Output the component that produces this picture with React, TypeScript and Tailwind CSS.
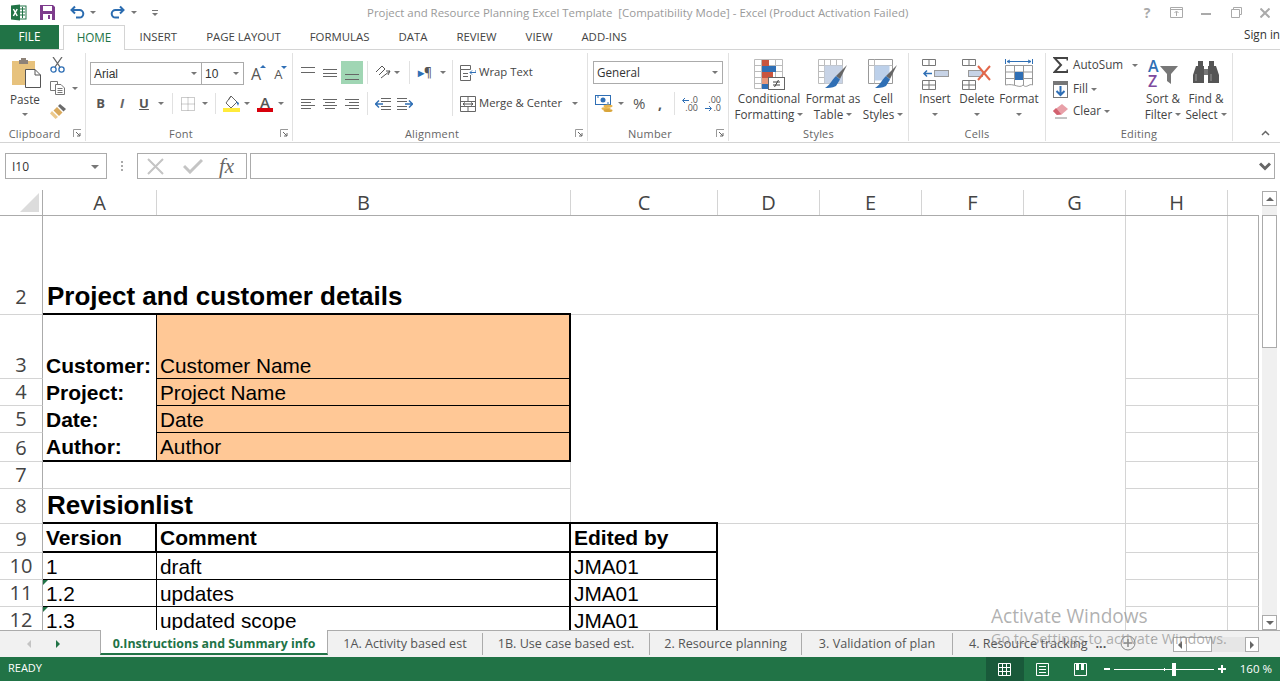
import React from 'react';

const ui = "font-['Open_Sans',sans-serif]";
const cellFont = "font-['Liberation_Sans',Arial,sans-serif]";

const Caret = ({ className = '' }: { className?: string }) => (
  <span className={`inline-block w-0 h-0 border-l-[3px] border-r-[3px] border-t-[3px] border-l-transparent border-r-transparent border-t-[#777] ${className}`} />
);

const Sep = ({ className = '' }: { className?: string }) => <div className={`w-px bg-[#e1e1e1] ${className}`} />;

// little square arrow at the corner of a group caption
const Launcher = () => (
  <svg width="9" height="9" viewBox="0 0 9 9" className="absolute right-[3px] top-[3px]">
    <path d="M0.5 8V0.5H8" fill="none" stroke="#999" />
    <path d="M3 3L7 7M7 4V7H4" fill="none" stroke="#666" />
  </svg>
);

const Group = ({ w, label, launcher, children }: { w: string; label: string; launcher?: boolean; children: React.ReactNode }) => (
  <div className={`${w} h-[88px] flex flex-col border-r border-[#e1e1e1] shrink-0`}>
    <div className="h-[73px] flex">{children}</div>
    <div className={`relative h-[15px] text-center text-[11px] leading-[15px] text-[#666] tracking-[0.2px] ${launcher ? 'pr-[16px]' : ''}`}>
      {label}
      {launcher && <Launcher />}
    </div>
  </div>
);

const BigButton = ({ w, icon, line1, line2, caret2 }: { w: string; icon: React.ReactNode; line1: string; line2?: string; caret2?: boolean }) => (
  <div className={`${w} flex flex-col items-center`}>
    <div className="h-[37px] pt-[6px] flex justify-center">{icon}</div>
    <div className="h-[16px] leading-[16px] whitespace-nowrap">{line1}</div>
    <div className="h-[16px] leading-[16px] whitespace-nowrap flex items-center gap-[3px]">
      {line2}
      {caret2 && <Caret className="mt-[1px]" />}
    </div>
  </div>
);

const Lines = ({ rows, w = 14 }: { rows: [number, number, number][]; w?: number }) => (
  <svg width={w} height="12" viewBox={`0 0 ${w} 12`} className="block">
    {rows.map(([x1, x2, y]) => (
      <path key={y} d={`M${x1} ${y + 0.5}H${x2}`} stroke="#666" />
    ))}
  </svg>
);

const ExcelIcon = () => (
  <svg width="17" height="17" viewBox="0 0 17 17">
    <rect x="8" y="2" width="8" height="13" fill="#fff" stroke="#217346" />
    <path d="M10 5h5M10 8h5M10 11h5M12.5 3v11" stroke="#217346" />
    <path d="M1 1.5L10 0.5V16.5L1 15.5Z" fill="#217346" />
    <path d="M3.4 5L7.2 12M7.2 5L3.4 12" stroke="#fff" strokeWidth="1.5" />
  </svg>
);

const SaveIcon = () => (
  <svg width="15" height="15" viewBox="0 0 15 15">
    <path d="M0 0H13L15 2V15H0Z" fill="#7d3c8c" />
    <rect x="3" y="1" width="9" height="5" fill="#fff" />
    <rect x="3" y="9" width="9" height="6" fill="#fff" />
    <rect x="8" y="10" width="2" height="4" fill="#7d3c8c" />
  </svg>
);

const UndoIcon = ({ flip }: { flip?: boolean }) => (
  <svg width="15" height="15" viewBox="0 0 15 15" className={flip ? '-scale-x-100' : ''}>
    <path d="M5 1.5L1.5 5L5 8.5" fill="none" stroke="#2b6cb0" strokeWidth="2" />
    <path d="M2 5H9.5a3.8 3.8 0 0 1 0 7.6H6" fill="none" stroke="#2b6cb0" strokeWidth="2" />
  </svg>
);

const PasteIcon = () => (
  <svg width="30" height="31" viewBox="0 0 30 31" className="ml-[2px]">
    <path d="M1 4H24V28H1Z" fill="#e7c27d" />
    <path d="M8 3H10V1H15V3H17V7H8Z" fill="#8d8278" />
    <path d="M14.5 12.5H24L29.5 18V30.5H14.5Z" fill="#fff" stroke="#555" />
    <path d="M24 12.5V18H29.5" fill="none" stroke="#555" />
  </svg>
);

const CutIcon = () => (
  <svg width="15" height="16" viewBox="0 0 15 16">
    <path d="M3 0L10 10M12 0L5 10" stroke="#666" strokeWidth="1.3" fill="none" />
    <circle cx="3.5" cy="12.5" r="2.6" fill="none" stroke="#2f6fb5" strokeWidth="1.3" />
    <circle cx="11.5" cy="12.5" r="2.6" fill="none" stroke="#2f6fb5" strokeWidth="1.3" />
  </svg>
);

const CopyIcon = () => (
  <svg width="15" height="14" viewBox="0 0 15 14" fill="none" stroke="#777">
    <path d="M0.5 0.5H7.5V9.5H0.5Z" />
    <path d="M5.5 3.5H11L14.5 7V13.5H5.5Z" fill="#fff" />
    <path d="M7.5 7.5H12.5M7.5 9.5H12.5M7.5 11.5H12.5" />
  </svg>
);

const PainterIcon = () => (
  <svg width="16" height="15" viewBox="0 0 16 15">
    <path d="M8 2L10 0L16 5L13.5 7.5Z" fill="#6b6b6b" />
    <path d="M7 3L12.5 8.5L9 12L3.5 6.5Z" fill="#d9a95c" />
    <path d="M2 7L8 13L5.5 15L0 9.5Z" fill="#ecc98c" />
  </svg>
);

const GrowA = ({ small }: { small?: boolean }) => (
  <div className="relative flex items-end">
    <span className={small ? 'text-[13px] leading-[14px] text-[#555]' : 'text-[16px] leading-[16px] text-[#555]'}>A</span>
    <span className={`absolute -top-[1px] -right-[5px] w-0 h-0 border-l-[3px] border-r-[3px] border-l-transparent border-r-transparent ${small ? 'border-t-[3px] border-t-[#2f6fb5]' : 'border-b-[3px] border-b-[#2f6fb5]'}`} />
  </div>
);

const BorderIcon = () => (
  <svg width="14" height="14" viewBox="0 0 14 14" fill="none" stroke="#999" strokeDasharray="1 1">
    <path d="M0.5 0.5H13.5V13.5H0.5ZM7 0.5V13.5M0.5 7H13.5" />
  </svg>
);

const FillIcon = () => (
  <svg width="17" height="17" viewBox="0 0 17 17">
    <path d="M8 1L14 7L8 13L3 8Z" fill="#fff" stroke="#666" />
    <path d="M8 1L5.5 5" stroke="#666" />
    <path d="M13 6L15 11L16 8Z" fill="#2f6fb5" />
    <rect x="0" y="13" width="17" height="4" fill="#ffeb3b" />
  </svg>
);

const FontColorIcon = () => (
  <div className="relative w-[16px] h-[17px] flex flex-col items-center">
    <span className="text-[15px] leading-[14px] text-[#555] font-semibold">A</span>
    <span className="absolute bottom-0 left-0 w-[16px] h-[4px] bg-[#d8000c]" />
  </div>
);

const OrientIcon = () => (
  <svg width="17" height="17" viewBox="0 0 17 17" fill="none" stroke="#555">
    <path d="M1 8L7 2L10 5L4 11" />
    <path d="M6 14L15 7M15 7H11M15 7L13 11" />
  </svg>
);

const IndentIcon = ({ flip }: { flip?: boolean }) => (
  <svg width="16" height="12" viewBox="0 0 16 12" className={flip ? '-scale-x-100' : ''}>
    <path d="M6 0.5H16M6 3.5H16M6 8.5H16M6 11.5H16" stroke="#666" />
    <path d="M0 6H8M4 2.5L0.5 6L4 9.5" fill="none" stroke="#2f6fb5" strokeWidth="1.5" />
  </svg>
);

const WrapIcon = () => (
  <svg width="16" height="16" viewBox="0 0 16 16" fill="none" stroke="#666">
    <path d="M0.5 0.5H10.5V4.5H0.5ZM0.5 4.5V15.5H10.5V10M3 8.5H8M3 11.5H8" />
    <path d="M16 5V7.5H10M12 5.5L10 7.5L12 9.5" stroke="#2f6fb5" />
  </svg>
);

const MergeIcon = () => (
  <svg width="16" height="16" viewBox="0 0 16 16" fill="none" stroke="#666">
    <path d="M0.5 0.5H15.5V15.5H0.5ZM0.5 5.5H15.5M0.5 10.5H15.5M8 0.5V5.5M8 10.5V15.5" />
    <path d="M3 8H13M5 6.5L3 8L5 9.5M11 6.5L13 8L11 9.5" stroke="#555" />
  </svg>
);

const AccountingIcon = () => (
  <svg width="19" height="17" viewBox="0 0 19 17">
    <rect x="0.5" y="0.5" width="15" height="9" fill="#fff" stroke="#2f6fb5" />
    <circle cx="8" cy="5" r="2.5" fill="#2f6fb5" />
    <path d="M2 2H4M12 8H14" stroke="#2f6fb5" />
    <ellipse cx="13" cy="11" rx="4.5" ry="1.5" fill="#e8b54d" />
    <ellipse cx="11" cy="13.5" rx="4.5" ry="1.5" fill="#e8b54d" />
    <ellipse cx="13" cy="15.5" rx="4.5" ry="1.5" fill="#d9a53a" />
  </svg>
);

const DecimalIcon = ({ more }: { more?: boolean }) => (
  <div className="relative w-[16px] h-[16px] text-[9px] leading-[8px] text-[#555]">
    <div className="text-right">{more ? '.00' : '.0'}</div>
    <div className="text-right">{more ? '.0' : '.00'}</div>
    <svg width="7" height="7" viewBox="0 0 7 7" className={`absolute left-0 ${more ? 'top-[9px]' : 'top-[1px]'}`} fill="none" stroke="#2f6fb5">
      {more ? <path d="M0 3.5H6M4 1L6.5 3.5L4 6" /> : <path d="M7 3.5H1M3 1L0.5 3.5L3 6" />}
    </svg>
  </div>
);

const CondIcon = () => (
  <svg width="31" height="31" viewBox="0 0 31 31" fill="none">
    <path d="M0.5 0.5H28.5V29.5H0.5ZM0.5 6.5H28.5M0.5 12.5H28.5M0.5 18.5H28.5M0.5 24.5H28.5M7.5 0.5V29.5M14.5 0.5V29.5M21.5 0.5V29.5" stroke="#bbb" />
    <rect x="8" y="1" width="7" height="6" fill="#c9553f" />
    <rect x="8" y="7" width="14" height="6" fill="#2f6fb5" />
    <rect x="8" y="13" width="11" height="6" fill="#c9553f" />
    <rect x="8" y="19" width="7" height="6" fill="#e89a7c" />
    <rect x="8" y="25" width="6" height="5" fill="#2f6fb5" />
    <rect x="14.5" y="18.5" width="16" height="12" fill="#fff" stroke="#666" />
    <path d="M19 23H26M19 26H26M24.5 21L20.5 28" stroke="#444" />
  </svg>
);

const Brush = () => (
  <>
    <path d="M29 6L22 20L18 17Z" fill="#666" />
    <path d="M18 17L22 20.5L18 27C14 29 10 29 7 29C12 26 13 22 18 17Z" fill="#2f6fb5" />
  </>
);

const TableIcon = () => (
  <svg width="30" height="31" viewBox="0 0 30 31" fill="none">
    <path d="M0.5 0.5H24.5V24.5H0.5ZM0.5 6.5H24.5M0.5 12.5H24.5M0.5 18.5H24.5M6.5 0.5V24.5M12.5 0.5V24.5M18.5 0.5V24.5" stroke="#bbb" />
    <rect x="6.5" y="6.5" width="18" height="18" fill="#c7d3e6" />
    <Brush />
  </svg>
);

const StylesIcon = () => (
  <svg width="30" height="31" viewBox="0 0 30 31" fill="none">
    <path d="M0.5 0.5H24.5V24.5H0.5Z" stroke="#999" />
    <path d="M0.5 6.5H24.5M6.5 0.5V24.5" stroke="#bbb" />
    <rect x="6.5" y="6.5" width="15" height="15" fill="#bcd0ea" />
    <Brush />
  </svg>
);

const InsertIcon = () => (
  <svg width="27" height="31" viewBox="0 0 27 31" fill="none">
    <path d="M0.5 0.5H13.5V6.5H0.5ZM7 0.5V6.5M0.5 21.5H13.5V30.5H0.5ZM0.5 26H13.5M7 21.5V30.5" stroke="#777" />
    <rect x="12.5" y="11.5" width="14" height="6" fill="#c7d3e6" stroke="#999" />
    <path d="M10 14.5H2M5 11.5L2 14.5L5 17.5" stroke="#2f6fb5" strokeWidth="1.5" />
  </svg>
);

const DeleteIcon = () => (
  <svg width="30" height="31" viewBox="0 0 30 31" fill="none">
    <path d="M0.5 0.5H13.5V6.5H0.5ZM7 0.5V6.5M0.5 21.5H13.5V30.5H0.5ZM0.5 26H13.5M7 21.5V30.5" stroke="#777" />
    <rect x="6.5" y="11.5" width="14" height="6" fill="#c7d3e6" stroke="#999" />
    <path d="M16 7L28 21M28 7L16 21" stroke="#e2674a" strokeWidth="2" />
  </svg>
);

const FormatIcon = () => (
  <svg width="28" height="31" viewBox="0 0 28 31" fill="none">
    <path d="M0.5 0V5M27.5 0V5M2 2.5H26M5 1L2 2.5L5 4M23 1L26 2.5L23 4" stroke="#2f6fb5" />
    <path d="M0.5 6.5H27.5V26C24 24 22 30 18 26C14 30 10 24 0.5 26ZM0.5 13H27.5M0.5 19.5H27.5M9.5 6.5V26M18.5 6.5V26" stroke="#999" />
    <rect x="10" y="13" width="8" height="8" fill="#2f6fb5" />
  </svg>
);

const SigmaIcon = () => (
  <svg width="15" height="16" viewBox="0 0 15 16" fill="none" stroke="#444" strokeWidth="2">
    <path d="M14.5 3.5V1H1.5L8 8L1.5 15H14.5V12.5" />
  </svg>
);

const FillDownIcon = () => (
  <svg width="15" height="17" viewBox="0 0 15 17" fill="none">
    <rect x="0.5" y="0.5" width="14" height="16" fill="#fff" stroke="#777" />
    <rect x="0" y="0" width="15" height="4" fill="#777" />
    <path d="M7.5 5V14M3.5 10L7.5 14L11.5 10" stroke="#2f6fb5" strokeWidth="2" />
  </svg>
);

const EraserIcon = () => (
  <svg width="15" height="15" viewBox="0 0 15 15">
    <path d="M9 0L15 5L8 11H4L0 7Z" fill="#e8a0a8" />
    <path d="M2 14H14" stroke="#888" />
    <path d="M4 11L0 7L3 4L8 10Z" fill="#d2616f" />
  </svg>
);

const SortIcon = () => (
  <div className="relative w-[30px] h-[31px] font-semibold text-[16px] leading-[15px]">
    <div className="text-[#2f6fb5]">A</div>
    <div className="text-[#7d4a9e]">Z</div>
    <svg width="18" height="18" viewBox="0 0 18 18" className="absolute right-0 top-[7px]">
      <path d="M0 0H18L11 8V18L7 15V8Z" fill="#777" />
    </svg>
  </div>
);

const BinocularIcon = () => (
  <svg width="26" height="25" viewBox="0 0 26 25" className="mt-[2px]">
    <path d="M5 0H10V5H11V22H0V14L3 5H5Z" fill="#555" />
    <path d="M16 0H21V5H23L26 14V22H15V5H16Z" fill="#555" />
    <rect x="11" y="8" width="4" height="6" fill="#777" />
    <path d="M3 13V20M18 13V20" stroke="#999" />
  </svg>
);

const ribbonTabs = ['INSERT', 'PAGE LAYOUT', 'FORMULAS', 'DATA', 'REVIEW', 'VIEW', 'ADD-INS'];

const columns = [
  { l: 'A', w: 'w-[114px]' },
  { l: 'B', w: 'w-[414px]' },
  { l: 'C', w: 'w-[147px]' },
  { l: 'D', w: 'w-[102px]' },
  { l: 'E', w: 'w-[102px]' },
  { l: 'F', w: 'w-[102px]' },
  { l: 'G', w: 'w-[102px]' },
  { l: 'H', w: 'w-[102px]' },
];

const Row = ({ n, h, children, c, dg, tall }: { n: number; h: string; children: React.ReactNode; c?: React.ReactNode; dg?: boolean; tall?: boolean }) => (
  <div className={`flex ${h} ${cellFont} text-black text-[20.8px] leading-[25px]`}>
    <div className={`w-[43px] shrink-0 flex items-end justify-center border-r border-b border-r-[#ababab] border-b-[#d4d4d4] ${ui} text-[20px] leading-[26px] text-[#444] ${tall ? 'pb-[4px]' : ''}`}>
      {n}
    </div>
    {children}
    {c}
    <div className={`w-[408px] shrink-0 border-r border-[#d4d4d4] ${dg ? 'border-b' : ''}`} />
    <div className="w-[102px] shrink-0 border-r border-b border-[#d4d4d4]" />
    <div className="w-[31px] shrink-0 border-r border-b border-r-[#ababab] border-b-[#d4d4d4]" />
  </div>
);

const detailRows = [
  { n: 3, h: 'h-[64px]', a: 'Customer:', b: 'Customer Name' },
  { n: 4, h: 'h-[27px]', a: 'Project:', b: 'Project Name' },
  { n: 5, h: 'h-[27px]', a: 'Date:', b: 'Date' },
  { n: 6, h: 'h-[29px]', a: 'Author:', b: 'Author', last: true },
];

const revisionRows = [
  { n: 10, v: '1', t: 'draft', tick: false },
  { n: 11, v: '1.2', t: 'updates', tick: true },
  { n: 12, v: '1.3', t: 'updated scope', tick: true },
];

const Sheet = () => (
  <div className="h-[414px] overflow-hidden">
    <Row
      n={2}
      h="h-[99px]"
      dg
      tall
      c={<div className="w-[147px] shrink-0 border-b border-[#d4d4d4]" />}
    >
      <div className="w-[528px] shrink-0 border-b-2 border-black flex items-end pl-[4px] font-bold text-[26px] leading-[32px] pb-[1px]">
        Project and customer details
      </div>
    </Row>
    {detailRows.map((r) => (
      <Row key={r.n} n={r.n} h={r.h} c={<div className="w-[147px] shrink-0" />}>
        <div className={`w-[114px] shrink-0 flex items-end pl-[3px] pb-[1px] font-bold text-[21px] border-r border-black ${r.last ? 'border-b-2 border-b-black' : ''}`}>{r.a}</div>
        <div className={`w-[414px] shrink-0 flex items-end pl-[3px] bg-[#ffc896] border-r-2 border-r-black ${r.last ? 'border-b-2 pb-[1px]' : 'border-b'} border-b-black`}>{r.b}</div>
      </Row>
    ))}
    <Row n={7} h="h-[27px]" c={<div className="w-[147px] shrink-0" />}>
      <div className="w-[528px] shrink-0 border-b border-r border-[#d4d4d4]" />
    </Row>
    <Row n={8} h="h-[35px]" dg tall c={<div className="w-[147px] shrink-0 border-b-2 border-black" />}>
      <div className="w-[528px] shrink-0 border-b-2 border-b-black flex items-end pl-[4px] font-bold text-[26px] leading-[32px] pb-[1px] relative">
        Revisionlist
        <span className="absolute right-0 top-0 bottom-0 w-px bg-[#d4d4d4]" />
      </div>
    </Row>
    <Row n={9} h="h-[29px]" c={<div className="w-[147px] shrink-0 flex items-end pl-[3px] pb-[1px] font-bold text-[21px] border-b-2 border-b-black border-r-2 border-r-black">Edited by</div>}>
      <div className="w-[114px] shrink-0 flex items-end pl-[3px] pb-[1px] font-bold text-[21px] border-b-2 border-r-2 border-black">Version</div>
      <div className="w-[414px] shrink-0 flex items-end pl-[3px] pb-[1px] font-bold text-[21px] border-b-2 border-r-2 border-black">Comment</div>
    </Row>
    {revisionRows.map((r) => (
      <Row
        key={r.n}
        n={r.n}
        h="h-[27px]"
        c={<div className="w-[147px] shrink-0 flex items-end pl-[3px] border-b border-b-black border-r-2 border-r-black">JMA01</div>}
      >
        <div className="relative w-[114px] shrink-0 flex items-end pl-[3px] border-b border-r border-black">
          {r.tick && <span className="absolute left-0 top-0 w-0 h-0 border-t-[5px] border-r-[5px] border-t-[#217346] border-r-transparent" />}
          {r.v}
        </div>
        <div className="w-[414px] shrink-0 flex items-end pl-[3px] border-b border-r-2 border-black">{r.t}</div>
      </Row>
    ))}
  </div>
);

const sheetTabs = [
  { t: '1A. Activity based est', w: 'w-[155px]' },
  { t: '1B. Use case based est.', w: 'w-[167px]' },
  { t: '2. Resource planning', w: 'w-[152px]' },
  { t: '3. Validation of plan', w: 'w-[151px]' },
];

export default function App() {
  return (
    <div className={`relative w-[1280px] h-[681px] overflow-hidden bg-white flex flex-col ${ui} text-[11.7px] text-[#444]`}>
      {/* title bar */}
      <div className="h-[25px] flex items-center relative shrink-0">
        <div className="ml-[10px]"><ExcelIcon /></div>
        <div className="ml-[13px]"><SaveIcon /></div>
        <div className="ml-[15px]"><UndoIcon /></div>
        <Caret className="ml-[5px]" />
        <div className="ml-[14px]"><UndoIcon flip /></div>
        <Caret className="ml-[6px]" />
        <div className="ml-[15px] flex flex-col items-center gap-[2px]">
          <span className="w-[6px] h-px bg-[#777]" />
          <Caret />
        </div>
        <div className="flex-1" />
        <div className="flex items-center text-[#aaa] mr-[10px]">
          <span className="w-[12px] text-center font-bold text-[14px]">?</span>
          <svg width="13" height="11" viewBox="0 0 13 11" fill="none" stroke="#aaa" className="ml-[17px]">
            <path d="M0.5 0.5H12.5V10.5H0.5ZM0.5 2.5H12.5M6.5 9V4.5M4.5 6L6.5 4L8.5 6" />
          </svg>
          <span className="ml-[18px] w-[10px] h-[2px] bg-[#aaa] mt-[3px]" />
          <svg width="11" height="11" viewBox="0 0 11 11" fill="none" stroke="#aaa" className="ml-[20px]">
            <path d="M2.5 2.5V0.5H10.5V7.5H8.5M0.5 2.5H8.5V10.5H0.5Z" />
          </svg>
          <svg width="10" height="10" viewBox="0 0 10 10" fill="none" stroke="#aaa" strokeWidth="2" className="ml-[18px]">
            <path d="M0.5 0.5L9.5 9.5M9.5 0.5L0.5 9.5" />
          </svg>
        </div>
        <div className="absolute left-[367px] top-[4px] text-[#9a9a9a] text-[11.45px] leading-[17px] whitespace-pre">
          {'Project and Resource Planning Excel Template  [Compatibility Mode] - Excel (Product Activation Failed)'}
        </div>
      </div>

      {/* ribbon tabs */}
      <div className="h-[25px] flex items-stretch border-b border-[#d4d4d4] shrink-0">
        <div className="w-[59px] bg-[#217346] text-white flex items-center justify-center">FILE</div>
        <div className="ml-[4px] w-[62px] h-[25px] bg-white border border-b-0 border-[#d4d4d4] text-[#217346] flex items-center justify-center">HOME</div>
        <div className="flex items-center text-[11.4px]">
          {ribbonTabs.map((t) => (
            <div key={t} className="px-[14.5px] whitespace-nowrap">{t}</div>
          ))}
        </div>
        <div className="flex-1" />
        <div className="flex items-center pb-[5px] text-[#333] whitespace-nowrap">Sign in</div>
      </div>

      {/* ribbon */}
      <div className="h-[93px] pt-[3px] flex border-b border-[#d4d4d4] shrink-0">
        <Group w="w-[86px]" label="Clipboard" launcher>
          <div className="w-[50px] flex flex-col items-center pt-[4px]">
            <PasteIcon />
            <div className="mt-[3px] leading-[16px]">Paste</div>
            <Caret className="mt-[6px]" />
          </div>
          <div className="flex flex-col">
            <div className="mt-[4px]"><CutIcon /></div>
            <div className="mt-[8px] flex items-center"><CopyIcon /><Caret className="ml-[7px]" /></div>
            <div className="mt-[9px]"><PainterIcon /></div>
          </div>
        </Group>

        <Group w="w-[207px]" label="Font" launcher>
          <div className="pl-[4px] pt-[9px]">
            <div className="flex items-center">
              <div className="w-[112px] h-[23px] border border-[#ababab] flex items-center justify-between px-[3px] text-[#333] text-[12px] font-['Liberation_Sans',sans-serif]">
                Arial <Caret className="mr-[1px]" />
              </div>
              <div className="w-[43px] -ml-px h-[23px] border border-[#ababab] flex items-center justify-between px-[3px] text-[#333] text-[12px] font-['Liberation_Sans',sans-serif]">
                10 <Caret className="mr-[1px]" />
              </div>
              <div className="ml-[7px]"><GrowA /></div>
              <div className="ml-[13px]"><GrowA small /></div>
            </div>
            <div className="flex items-center mt-[8px] h-[21px]">
              <span className="w-[21px] text-center font-bold text-[13px] text-[#555]">B</span>
              <span className="w-[22px] text-center italic font-bold text-[13px] text-[#666]">I</span>
              <span className="w-[22px] text-center underline font-bold text-[13px] text-[#555]">U</span>
              <span className="w-[12px] flex justify-center"><Caret /></span>
              <Sep className="ml-[5px] h-[21px]" />
              <div className="ml-[8px]"><BorderIcon /></div>
              <Caret className="ml-[7px]" />
              <Sep className="ml-[7px] h-[21px]" />
              <div className="ml-[7px]"><FillIcon /></div>
              <Caret className="ml-[4px]" />
              <div className="ml-[7px]"><FontColorIcon /></div>
              <Caret className="ml-[5px]" />
            </div>
          </div>
        </Group>

        <Group w="w-[295px]" label="Alignment" launcher>
          <div className="w-[159px] pl-[8px] pt-[8px] shrink-0">
            <div className="flex items-center h-[23px]">
              <Lines rows={[[0, 14, 0], [0, 14, 5]]} />
              <div className="ml-[8px]"><Lines rows={[[0, 14, 2], [0, 14, 6], [0, 14, 9]]} /></div>
              <div className="ml-[4px] w-[22px] h-[23px] bg-[#a0d6b4] flex items-end justify-center pb-[3px]">
                <Lines rows={[[0, 14, 5], [0, 14, 10]]} />
              </div>
              <Sep className="ml-[4px] h-[23px]" />
              <div className="ml-[7px]"><OrientIcon /></div>
              <Caret className="ml-[2px]" />
              <Sep className="ml-[9px] h-[23px]" />
              <span className="ml-[8px] text-[12px] font-semibold text-[#555] leading-none"><span className="text-[#2f6fb5]">▸</span>¶</span>
              <Caret className="ml-[8px]" />
            </div>
            <div className="flex items-center h-[23px] mt-[8px]">
              <Lines rows={[[0, 14, 1], [0, 10, 4], [0, 14, 7], [0, 10, 10]]} />
              <div className="ml-[8px]"><Lines rows={[[0, 14, 1], [2, 12, 4], [0, 14, 7], [2, 12, 10]]} /></div>
              <div className="ml-[8px]"><Lines rows={[[0, 14, 1], [4, 14, 4], [0, 14, 7], [4, 14, 10]]} /></div>
              <Sep className="ml-[8px] h-[23px]" />
              <div className="ml-[7px]"><IndentIcon /></div>
              <div className="ml-[6px]"><IndentIcon flip /></div>
            </div>
          </div>
          <Sep className="h-[56px] mt-[7px] shrink-0" />
          <div className="pl-[7px] pt-[8px] text-[11.3px]">
            <div className="flex items-center h-[23px] gap-[3px]"><WrapIcon />Wrap Text</div>
            <div className="flex items-center h-[23px] mt-[8px] gap-[3px]"><MergeIcon />Merge &amp; Center<Caret className="ml-[7px]" /></div>
          </div>
        </Group>

        <Group w="w-[141px]" label="Number" launcher>
          <div className="pl-[5px] pt-[8px]">
            <div className="w-[130px] h-[23px] border border-[#ababab] flex items-center justify-between px-[3px] text-[#333]">
              General <Caret className="mr-[1px]" />
            </div>
            <div className="flex items-center h-[23px] mt-[8px] pl-[2px]">
              <AccountingIcon />
              <Caret className="ml-[4px]" />
              <span className="ml-[9px] w-[14px] text-[15px] leading-none text-[#555]">%</span>
              <span className="ml-[11px] w-[6px] font-bold text-[14px] leading-none text-[#555]">,</span>
              <Sep className="ml-[10px] h-[23px]" />
              <div className="ml-[7px]"><DecimalIcon /></div>
              <div className="ml-[7px]"><DecimalIcon more /></div>
            </div>
          </div>
        </Group>

        <Group w="w-[180px]" label="Styles">
          <div className="w-[3px]" />
          <BigButton w="w-[74px]" icon={<CondIcon />} line1="Conditional" line2="Formatting" caret2 />
          <BigButton w="w-[54px]" icon={<TableIcon />} line1="Format as" line2="Table" caret2 />
          <BigButton w="w-[46px]" icon={<StylesIcon />} line1="Cell" line2="Styles" caret2 />
        </Group>

        <Group w="w-[137px]" label="Cells">
          <div className="w-[5px]" />
          <BigButton w="w-[42px]" icon={<InsertIcon />} line1="Insert" caret2 />
          <BigButton w="w-[42px]" icon={<DeleteIcon />} line1="Delete" caret2 />
          <BigButton w="w-[42px]" icon={<FormatIcon />} line1="Format" caret2 />
        </Group>

        <Group w="w-[187px]" label="Editing">
          <div className="w-[98px] pl-[7px] pt-[3px] shrink-0">
            <div className="flex items-center h-[18px]"><SigmaIcon /><span className="ml-[5px]">AutoSum</span><Caret className="ml-[9px]" /></div>
            <div className="flex items-center h-[18px] mt-[6px]"><FillDownIcon /><span className="ml-[5px]">Fill</span><Caret className="ml-[3px]" /></div>
            <div className="flex items-center h-[18px] mt-[4px]"><EraserIcon /><span className="ml-[5px]">Clear</span><Caret className="ml-[3px]" /></div>
          </div>
          <BigButton w="w-[38px]" icon={<SortIcon />} line1="Sort &" line2="Filter" caret2 />
          <BigButton w="w-[48px]" icon={<BinocularIcon />} line1="Find &" line2="Select" caret2 />
        </Group>

        <div className="flex-1 relative">
          <svg width="9" height="6" viewBox="0 0 9 6" fill="none" stroke="#666" strokeWidth="1.5" className="absolute left-[28px] top-[77px]">
            <path d="M1 5L4.5 1.5L8 5" />
          </svg>
        </div>
      </div>

      {/* formula bar */}
      <div className="mt-[10px] h-[26px] flex shrink-0">
        <div className="ml-[5px] w-[102px] border border-[#ababab] flex items-center justify-between pl-[6px] pr-[7px] pt-[1px] text-[#333] text-[12px]">
          I10 <Caret className="border-l-[4px] border-r-[4px] border-t-[4px]" />
        </div>
        <div className="w-[30px] flex flex-col items-center justify-center gap-[2px]">
          <span className="w-[2px] h-[2px] bg-[#aaa]" />
          <span className="w-[2px] h-[2px] bg-[#aaa]" />
          <span className="w-[2px] h-[2px] bg-[#aaa]" />
        </div>
        <div className="w-[110px] border border-[#ababab] flex items-center">
          <svg width="17" height="17" viewBox="0 0 17 17" fill="none" stroke="#c4c4c4" strokeWidth="2" className="ml-[9px]">
            <path d="M1 1L16 16M16 1L1 16" />
          </svg>
          <svg width="20" height="16" viewBox="0 0 20 16" fill="none" stroke="#c4c4c4" strokeWidth="3" className="ml-[19px]">
            <path d="M1 8L7 14L19 2" />
          </svg>
          <span className="ml-[16px] font-['Liberation_Serif',serif] italic text-[21px] leading-none text-[#666]">fx</span>
        </div>
        <div className="ml-[3px] w-[1025px] border border-[#ababab] flex items-center justify-end pr-[3px]">
          <svg width="12" height="9" viewBox="0 0 12 9" fill="none" stroke="#666" strokeWidth="3">
            <path d="M1 1.5L6 6.5L11 1.5" />
          </svg>
        </div>
      </div>

      {/* sheet */}
      <div className="mt-[11px] flex h-[440px] shrink-0">
        <div className="w-[1259px] shrink-0">
          <div className="h-[26px] flex border-b border-[#ababab]">
            <div className="w-[43px] shrink-0 border-r border-[#ababab] relative">
              <span className="absolute left-[20px] top-[3px] w-0 h-0 border-b-[19px] border-l-[19px] border-b-[#dcdcdc] border-l-transparent" />
            </div>
            {columns.map((c) => (
              <div key={c.l} className={`${c.w} shrink-0 border-r border-[#d4d4d4] text-center text-[20px] leading-[25px] text-[#444]`}>{c.l}</div>
            ))}
          </div>
          <Sheet />
        </div>
        <div className="flex-1 flex flex-col pl-[3px] pr-[3px]">
          <div className="h-[15px] mt-px border border-[#ababab] flex items-center justify-center">
            <span className="w-0 h-0 border-l-[4px] border-r-[4px] border-b-[4px] border-l-transparent border-r-transparent border-b-[#666]" />
          </div>
          <div className="flex-1 bg-[#f0f0f0] flex flex-col">
            <div className="mt-[9px] h-[133px] bg-white border border-[#ababab]" />
          </div>
          <div className="h-[15px] border border-[#ababab] flex items-center justify-center">
            <span className="w-0 h-0 border-l-[4px] border-r-[4px] border-t-[4px] border-l-transparent border-r-transparent border-t-[#666]" />
          </div>
        </div>
      </div>

      {/* sheet tabs */}
      <div className="h-[27px] flex bg-[#f1f1f1] border-t border-[#ababab] shrink-0 text-[12.6px] text-[#555] relative">
        <div className="w-[100px] flex items-center shrink-0">
          <span className="ml-[27px] w-0 h-0 border-t-[4px] border-b-[4px] border-r-[4px] border-t-transparent border-b-transparent border-r-[#c4c4c4]" />
          <span className="ml-[25px] w-0 h-0 border-t-[4px] border-b-[4px] border-l-[4px] border-t-transparent border-b-transparent border-l-[#217346]" />
        </div>
        <div className="-mt-px w-[228px] h-[25px] bg-white border-l border-r border-[#ababab] border-b-2 border-b-[#217346] text-[#217346] font-bold flex items-center justify-center whitespace-nowrap text-[12.4px] pt-[5px]">
          0.Instructions and Summary info
        </div>
        {sheetTabs.map((t) => (
          <div key={t.t} className={`${t.w} h-[22px] mt-[2px] border-r border-[#ababab] flex items-center justify-center whitespace-nowrap`}>{t.t}</div>
        ))}
        <div className="ml-[16px] h-[22px] mt-[2px] flex items-center whitespace-nowrap">4. Resource tracking<span className="ml-[8px] font-bold">...</span></div>
        <svg width="16" height="16" viewBox="0 0 16 16" fill="none" stroke="#888" className="ml-[14px] mt-[4px]">
          <circle cx="8" cy="8" r="7" />
          <path d="M8 4V12M4 8H12" strokeWidth="1.5" />
        </svg>
        <div className="ml-[16px] mt-[5px] flex flex-col gap-[2px] py-[1px]">
          <span className="w-[1px] h-[1px] bg-[#aaa]" />
          <span className="w-[1px] h-[1px] bg-[#aaa]" />
          <span className="w-[1px] h-[1px] bg-[#aaa]" />
        </div>
        <div className="absolute left-[1173px] top-[6px] flex h-[15px]">
          <div className="w-[14px] border border-[#ababab] bg-white flex items-center justify-center">
            <span className="w-0 h-0 border-t-[4px] border-b-[4px] border-r-[4px] border-t-transparent border-b-transparent border-r-[#666]" />
          </div>
          <div className="w-[26px] -ml-px bg-white border border-[#ababab]" />
          <div className="w-[33px] bg-[#e6e6e6]" />
          <div className="w-[14px] border border-[#ababab] bg-white flex items-center justify-center">
            <span className="w-0 h-0 border-t-[4px] border-b-[4px] border-l-[4px] border-t-transparent border-b-transparent border-l-[#666]" />
          </div>
        </div>
      </div>

      {/* status bar */}
      <div className="flex-1 bg-[#217346] text-white flex items-center text-[11px]">
        <span className="ml-[8px] pb-[1px]">READY</span>
        <div className="flex-1" />
        <div className="w-[38px] h-full bg-[#19593a] flex items-center justify-center">
          <svg width="13" height="13" viewBox="0 0 13 13" fill="none" stroke="#fff">
            <path d="M0.5 0.5H12.5V12.5H0.5ZM4.5 0.5V12.5M8.5 0.5V12.5M0.5 4.5H12.5M0.5 8.5H12.5" />
          </svg>
        </div>
        <div className="w-[38px] flex justify-center">
          <svg width="13" height="13" viewBox="0 0 13 13" fill="none" stroke="#fff">
            <path d="M0.5 0.5H12.5V12.5H0.5ZM3 3.5H10M3 6.5H10M3 9.5H10" />
          </svg>
        </div>
        <div className="w-[38px] flex justify-center">
          <svg width="13" height="13" viewBox="0 0 13 13" fill="none" stroke="#fff">
            <path d="M0.5 0.5H12.5V12.5H0.5Z" />
            <rect x="2" y="0" width="3" height="7" fill="#fff" stroke="none" />
            <rect x="7" y="0" width="3" height="7" fill="#fff" stroke="none" />
          </svg>
        </div>
        <span className="ml-[4px] w-[6px] h-[2px] bg-white" />
        <div className="relative ml-[4px] w-[100px] h-px bg-white">
          <span className="absolute left-[58px] -top-[6px] w-[4px] h-[13px] bg-white" />
          <span className="absolute left-[50px] -top-[1px] w-px h-[3px] bg-white" />
        </div>
        <div className="relative ml-[4px] w-[8px] h-[8px]">
          <span className="absolute left-0 top-[3px] w-[8px] h-[2px] bg-white" />
          <span className="absolute left-[3px] top-0 w-[2px] h-[8px] bg-white" />
        </div>
        <span className="ml-[14px] mr-[8px] text-[11.5px] pb-[1px]">160 %</span>
      </div>

      {/* activation watermark */}
      <div className="absolute left-[991px] top-[604px] text-[#8e8e8e]/70 pointer-events-none">
        <div className="text-[19.1px] leading-[25px]">Activate Windows</div>
        <div className="text-[14.4px] leading-[20px] whitespace-nowrap">Go to Settings to activate Windows.</div>
      </div>
    </div>
  );
}
